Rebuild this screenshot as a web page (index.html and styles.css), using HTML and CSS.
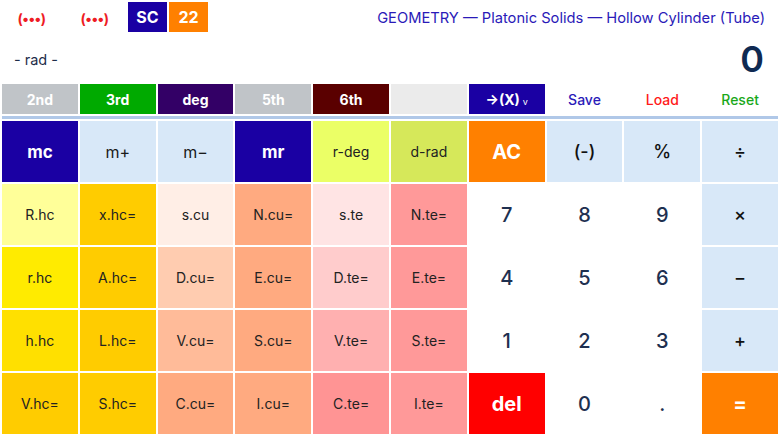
FILE: index.html
```html
<!DOCTYPE html>
<html lang="en">
<head>
<meta charset="utf-8">
<title>Calculator</title>
<link rel="stylesheet" href="styles.css">
</head>
<body>
<div class="app">
  <header class="head">
    <div class="left">
      <span class="ind ind1">(•••)</span>
      <span class="ind ind2">(•••)</span>
      <span class="tag tag-sc">SC</span>
      <span class="tag tag-num">22</span>
    </div>
    <div class="title">GEOMETRY — Platonic Solids — Hollow Cylinder (Tube)</div>
  </header>
  <div class="display">
    <span class="mode">- rad -</span>
    <span class="value">0</span>
  </div>
  <div class="fnrow">
    <div class="fn gray">2nd</div>
    <div class="fn green">3rd</div>
    <div class="fn purple">deg</div>
    <div class="fn gray">5th</div>
    <div class="fn maroon">6th</div>
    <div class="fn blank"></div>
    <div class="fn navy">→(X)<span class="caret">v</span></div>
    <div class="fn link save">Save</div>
    <div class="fn link load">Load</div>
    <div class="fn link reset">Reset</div>
  </div>
  <div class="rule"></div>
  <div class="keys">
    <div class="k navy-k bold">mc</div>
    <div class="k pale">m+</div>
    <div class="k pale">m−</div>
    <div class="k navy-k bold">mr</div>
    <div class="k lime sm">r-deg</div>
    <div class="k lime2 sm">d-rad</div>
    <div class="k orange big">AC</div>
    <div class="k pale op">(-)</div>
    <div class="k pale op">%</div>
    <div class="k pale op">÷</div>

    <div class="k y1 sm">R.hc</div>
    <div class="k y3 sm">x.hc=</div>
    <div class="k c1 sm">s.cu</div>
    <div class="k c4 sm">N.cu=</div>
    <div class="k t1 sm">s.te</div>
    <div class="k t4 sm">N.te=</div>
    <div class="k num">7</div>
    <div class="k num">8</div>
    <div class="k num">9</div>
    <div class="k pale op">×</div>

    <div class="k y2 sm">r.hc</div>
    <div class="k y3 sm">A.hc=</div>
    <div class="k c2 sm">D.cu=</div>
    <div class="k c4 sm">E.cu=</div>
    <div class="k t2 sm">D.te=</div>
    <div class="k t4 sm">E.te=</div>
    <div class="k num">4</div>
    <div class="k num">5</div>
    <div class="k num">6</div>
    <div class="k pale op">−</div>

    <div class="k y2b sm">h.hc</div>
    <div class="k y3 sm">L.hc=</div>
    <div class="k c3 sm">V.cu=</div>
    <div class="k c4 sm">S.cu=</div>
    <div class="k t3 sm">V.te=</div>
    <div class="k t4 sm">S.te=</div>
    <div class="k num">1</div>
    <div class="k num">2</div>
    <div class="k num">3</div>
    <div class="k pale op">+</div>

    <div class="k y3 sm">V.hc=</div>
    <div class="k y3 sm">S.hc=</div>
    <div class="k c4 sm">C.cu=</div>
    <div class="k c4 sm">I.cu=</div>
    <div class="k t4b sm">C.te=</div>
    <div class="k t4 sm">I.te=</div>
    <div class="k red big">del</div>
    <div class="k num">0</div>
    <div class="k num">.</div>
    <div class="k orange big">=</div>
  </div>
</div>
</body>
</html>
```

FILE: styles.css
```css
* { box-sizing: border-box; }
html, body { margin: 0; padding: 0; background: #ffffff; }
body {
  font-family: Inter, "Noto Sans", "Liberation Sans", sans-serif;
  width: 779px;
  height: 438px;
  overflow: hidden;
}
.app { display: flex; flex-direction: column; }

.head {
  height: 33px;
  padding: 2px 14px 0 0;
  display: flex;
  justify-content: space-between;
  align-items: flex-start;
}
.left { display: flex; align-items: center; height: 30px; }
.ind {
  color: #ee1c24;
  font-weight: 700;
  font-size: 14px;
  width: 29px;
  text-align: center;
  white-space: nowrap;
  letter-spacing: -0.5px;
  margin-top: 2px;
}
.ind1 { margin-left: 17px; }
.ind2 { margin-left: 34px; }
.tag {
  height: 30px;
  width: 39px;
  display: flex;
  align-items: center;
  justify-content: center;
  color: #ffffff;
  font-weight: 700;
  font-size: 16px;
}
.tag-sc { background: #1a00a3; margin-left: 19px; }
.tag-num { background: #ff8000; margin-left: 2px; }
.title {
  color: #2a1ab8;
  font-size: 14.7px;
  line-height: 30px;
  margin-top: 1px;
}

.display {
  height: 51px;
  display: flex;
  justify-content: space-between;
  align-items: center;
  padding: 0 15px 0 14px;
}
.mode { color: #1e2d4a; font-size: 14.5px; margin-top: 1px; }
.value {
  color: #0f2a52;
  font-size: 36px;
  font-weight: 600;
  line-height: 1;
  margin-top: 1px;
}

.fnrow {
  display: grid;
  grid-template-columns: repeat(10, 1fr);
  gap: 2px;
  padding: 0 1px 0 2px;
  height: 30px;
}
.fn {
  display: flex;
  align-items: center;
  justify-content: center;
  font-weight: 700;
  font-size: 14px;
  color: #ffffff;
}
.gray { background: #c0c4c8; }
.green { background: #00aa00; }
.purple { background: #330066; }
.maroon { background: #5a0000; }
.blank { background: #ebebeb; }
.navy { background: #1a00a3; font-size: 14px; }
.caret { font-size: 9px; font-weight: 400; margin-left: 3px; margin-top: 4px; }
.link { font-weight: 500; font-size: 14px; }
.save { color: #2a1ab8; }
.load { color: #ff1a1a; }
.reset { color: #1aa81a; }

.rule {
  height: 3px;
  margin: 2px 1px 0 2px;
  background: #b0c8e8;
}

.keys {
  margin-top: 2px;
  display: grid;
  grid-template-columns: repeat(10, 1fr);
  grid-template-rows: repeat(5, 61px);
  gap: 2px;
  padding: 0 1px 0 2px;
}
.k {
  display: flex;
  align-items: center;
  justify-content: center;
  color: #1a1a1a;
  font-size: 16px;
}
.sm { font-size: 14px; color: #222222; }
.bold { font-weight: 700; font-size: 17px; color: #ffffff; }
.big { font-weight: 700; font-size: 20px; color: #ffffff; }
.op { font-size: 18px; font-weight: 500; color: #111111; }
.num { background: #ffffff; color: #1e3050; font-size: 20px; font-weight: 500; }

.navy-k { background: #1a00a3; }
.pale { background: #d8e8f8; }
.lime { background: #ebff66; }
.lime2 { background: #d6e85a; }
.orange { background: #ff8000; }
.red { background: #ff0000; }

.y1 { background: #ffff99; }
.y2 { background: #ffeb00; }
.y2b { background: #ffe000; }
.y3 { background: #ffcc00; }
.c1 { background: #ffeee6; }
.c2 { background: #ffccb0; }
.c3 { background: #ffbb99; }
.c4 { background: #ffaa80; }
.t1 { background: #ffe4e4; }
.t2 { background: #ffcccc; }
.t3 { background: #ffb0b0; }
.t4 { background: #ff9999; }
.t4b { background: #ff9494; }
```
